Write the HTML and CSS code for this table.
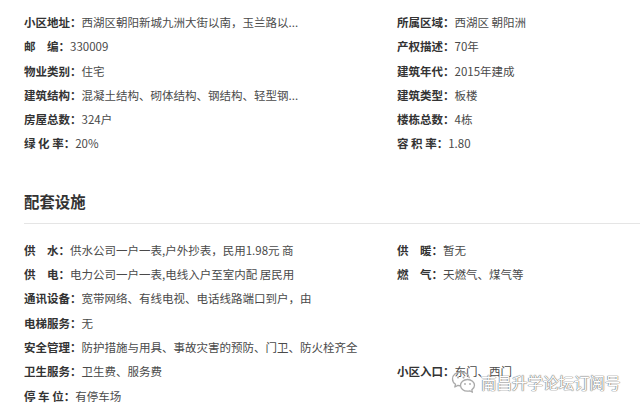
FILE: index.html
```html
<!DOCTYPE html>
<html lang="zh-CN">
<head>
    <meta charset="UTF-8">
    <title>小区详情</title>
    <link rel="stylesheet" href="styles.css">
</head>
<body>
<div class="page">
    <ul class="info">
        <li><span class="key">小区地址：</span>西湖区朝阳新城九洲大街以南，玉兰路以...</li>
        <li><span class="key">所属区域：</span>西湖区 朝阳洲</li>
        <li><span class="key">邮　编：</span>330009</li>
        <li><span class="key">产权描述：</span>70年</li>
        <li><span class="key">物业类别：</span>住宅</li>
        <li><span class="key">建筑年代：</span>2015年建成</li>
        <li><span class="key">建筑结构：</span>混凝土结构、砌体结构、钢结构、轻型钢...</li>
        <li><span class="key">建筑类型：</span>板楼</li>
        <li><span class="key">房屋总数：</span>324户</li>
        <li><span class="key">楼栋总数：</span>4栋</li>
        <li><span class="key">绿 化 率：</span>20%</li>
        <li><span class="key">容 积 率：</span>1.80</li>
    </ul>

    <h2 class="title">配套设施</h2>

    <ul class="info facility">
        <li><span class="key">供　水：</span>供水公司一户一表,户外抄表，民用1.98元 商</li>
        <li><span class="key">供　暖：</span>暂无</li>
        <li><span class="key">供　电：</span>电力公司一户一表,电线入户至室内配 居民用</li>
        <li><span class="key">燃　气：</span>天燃气、煤气等</li>
        <li class="wide"><span class="key">通讯设备：</span>宽带网络、有线电视、电话线路端口到户，由</li>
        <li class="wide"><span class="key">电梯服务：</span>无</li>
        <li class="wide"><span class="key">安全管理：</span>防护措施与用具、事故灾害的预防、门卫、防火栓齐全</li>
        <li><span class="key">卫生服务：</span>卫生费、服务费</li>
        <li><span class="key">小区入口：</span>东门、西门</li>
        <li><span class="key">停 车 位：</span>有停车场</li>
    </ul>
</div>

<div class="mark">
    <svg class="mark-icon" width="26" height="24" viewBox="0 0 26 24">
        <path d="M10 2C5 2 1.5 5.2 1.5 9c0 2.2 1.1 4 3 5.3L3.8 17l3.1-1.6c1 .3 2 .5 3.1.5" fill="none" stroke="#aaa" stroke-width="1.3" stroke-linejoin="round"/>
        <path d="M10 2c4.5 0 8 2.8 8.4 6.3" fill="none" stroke="#aaa" stroke-width="1.3"/>
        <circle cx="7" cy="7.5" r="1" fill="#aaa"/>
        <circle cx="12.5" cy="7.5" r="1" fill="#aaa"/>
        <path d="M16.5 9.5c-4 0-7 2.6-7 5.8s3 5.8 7 5.8c.8 0 1.6-.1 2.3-.3l2.6 1.4-.6-2.3c1.6-1.1 2.7-2.8 2.7-4.6 0-3.2-3-5.8-7-5.8z" fill="#fff" stroke="#aaa" stroke-width="1.3" stroke-linejoin="round"/>
        <circle cx="14" cy="14" r=".9" fill="#aaa"/>
        <circle cx="19" cy="14" r=".9" fill="#aaa"/>
    </svg>
    <span class="mark-text">南昌升学论坛订阅号</span>
</div>
</body>
</html>
```

FILE: styles.css
```css
* {
    margin: 0;
    padding: 0;
}

ul {
    list-style: none;
}

body {
    font-family: "Noto Sans CJK SC", sans-serif;
    font-size: 11.5px;
    color: #4a4a4a;
    background: #fff;
    overflow: hidden;
}

.page {
    padding: 10px 0 0 24px;
}

.info {
    display: grid;
    grid-template-columns: 373px 1fr;
}

.info li {
    line-height: 24.3px;
    height: 24.3px;
    white-space: nowrap;
}

.info li.wide {
    grid-column: 1 / -1;
}

.key {
    font-weight: bold;
    color: #333;
}

.title {
    margin-top: 33px;
    padding-bottom: 10px;
    border-bottom: 1px solid #e5e5e5;
    font-size: 15.4px;
    line-height: 24px;
    color: #333;
}

.facility {
    margin-top: 14px;
}

.mark {
    position: absolute;
    left: 451px;
    top: 370px;
    display: flex;
    align-items: center;
    gap: 4px;
}

.mark-text {
    font-size: 15.5px;
    line-height: 22px;
    color: #fff;
    text-shadow: 0 0 1px #777, 0 0 1px #777, 0 0 1px #777;
}
```
